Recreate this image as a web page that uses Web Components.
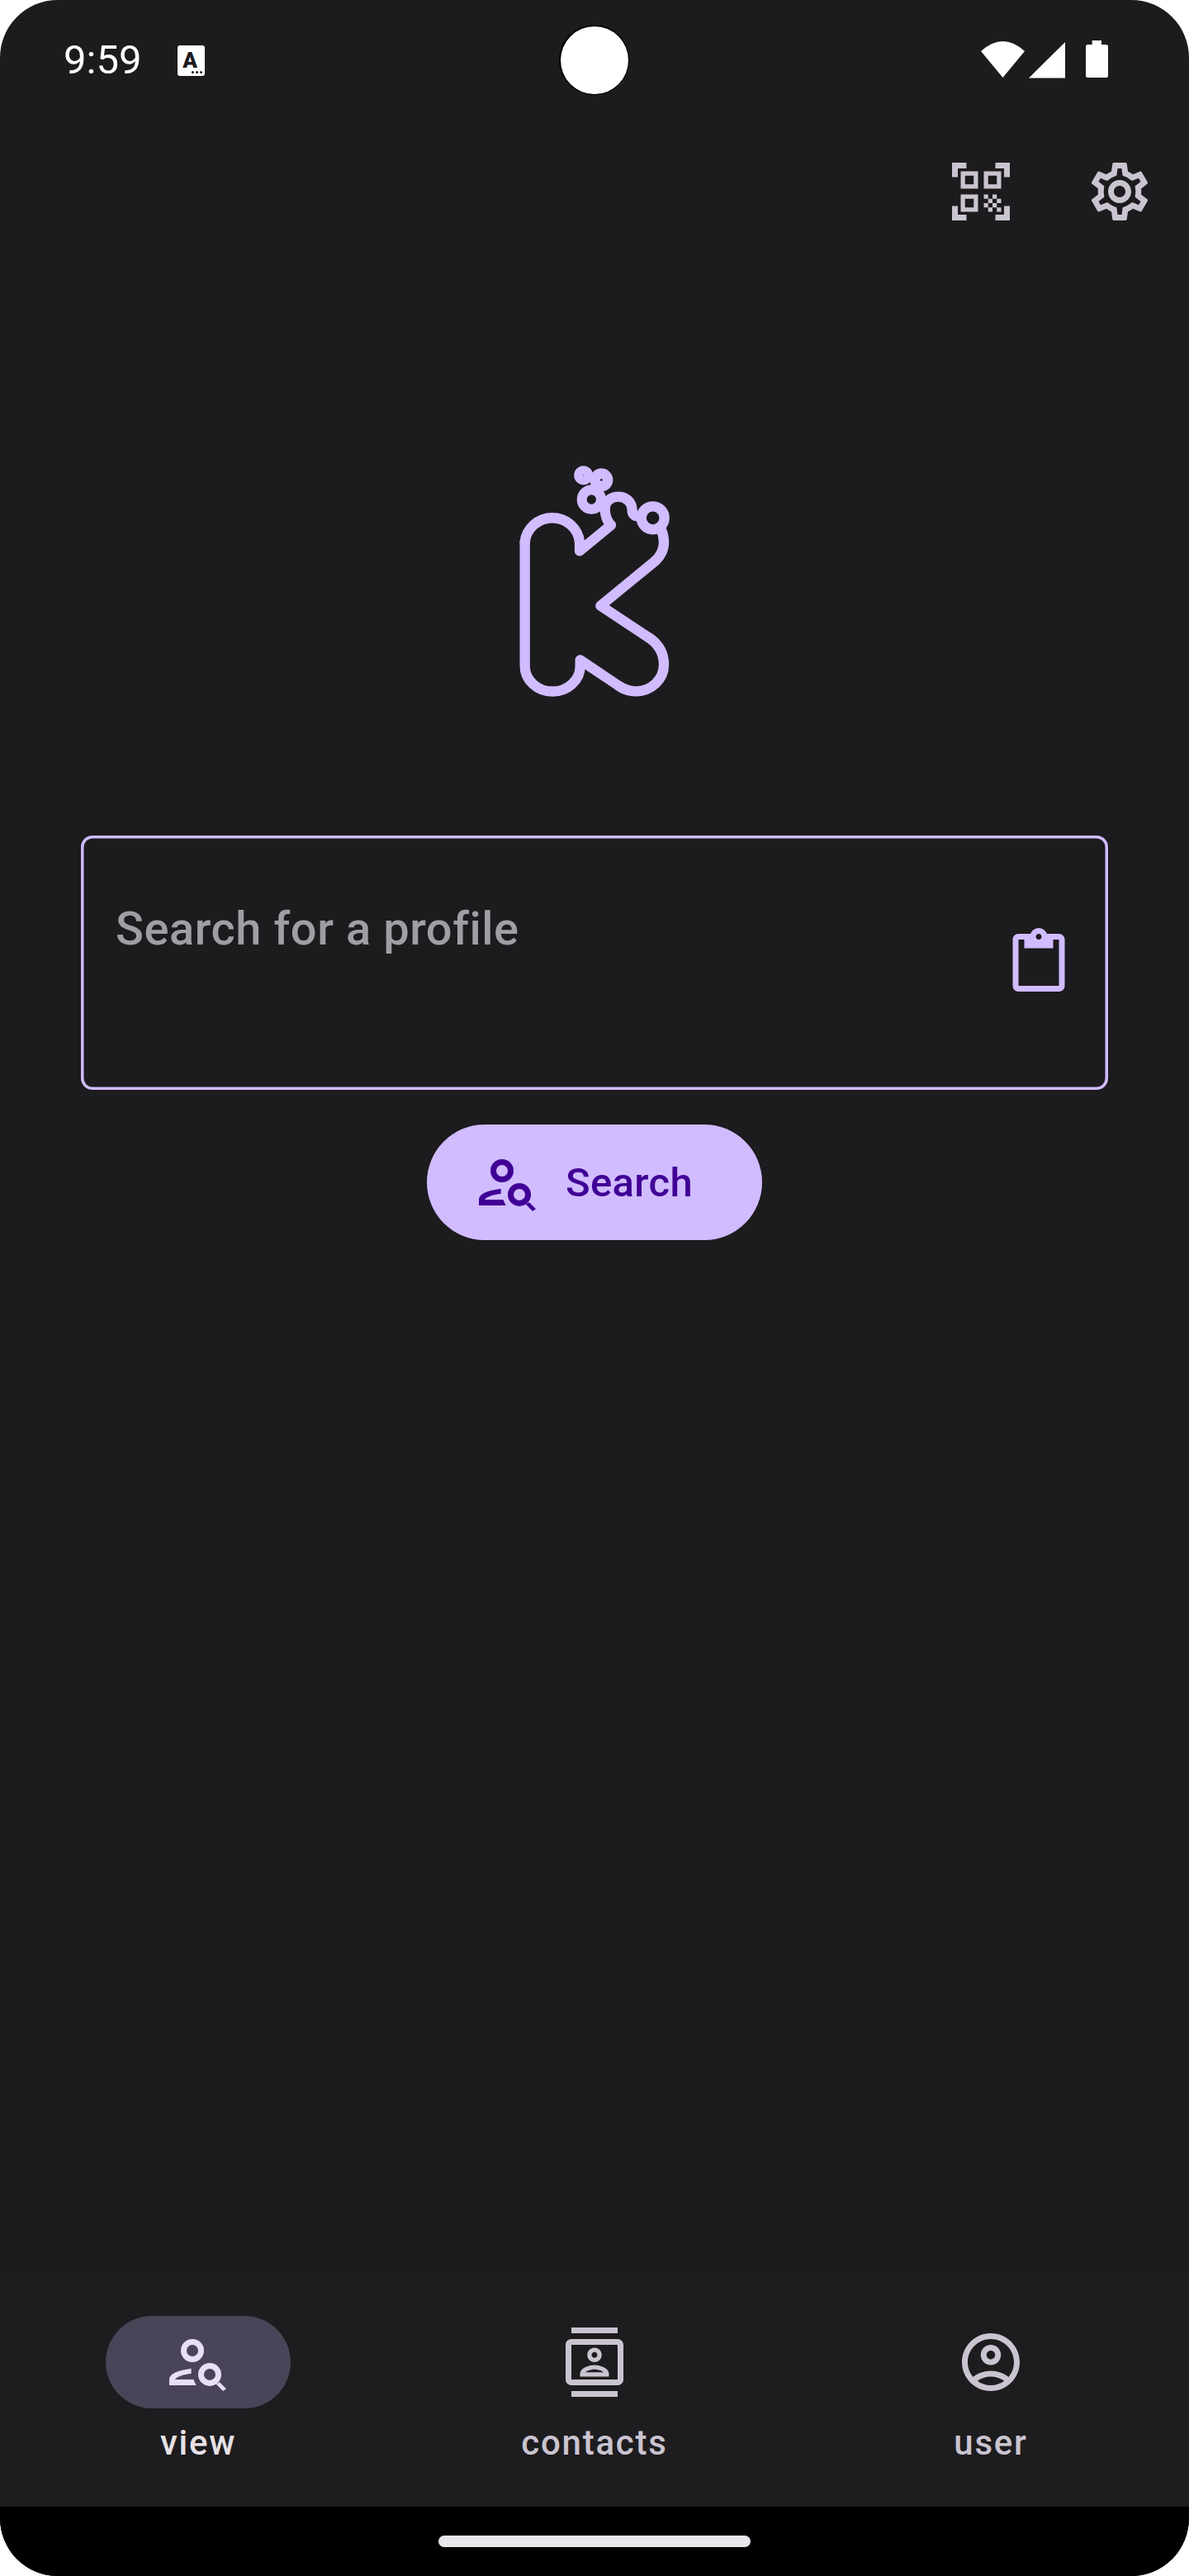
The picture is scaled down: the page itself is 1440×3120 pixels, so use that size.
<!DOCTYPE html>
<html>
<head>
<meta charset="utf-8">
<title>Profile search</title>
<style>
    html, body { margin: 0; padding: 0; background: #fff; }
    body { font-family: Roboto, "Liberation Sans", sans-serif; }
</style>
</head>
<body>

<app-screen>
    <status-bar slot="top"></status-bar>
    <action-bar slot="top">
        <icon-glyph name="qr" style="color:#cac4d0"></icon-glyph>
        <icon-glyph name="settings" style="color:#cac4d0"></icon-glyph>
    </action-bar>

    <search-view></search-view>

    <nav-bar slot="bottom">
        <nav-item icon="personSearch" active>view</nav-item>
        <nav-item icon="contacts">contacts</nav-item>
        <nav-item icon="account">user</nav-item>
    </nav-bar>
    <gesture-bar slot="bottom"></gesture-bar>
</app-screen>

<script>
(function() {
    // material icon paths, 24 unit grid
    const ICONS = {
        qr: 'M9.5 6.5v3h-3v-3h3M11 5H5v6h6V5zm-1.5 9.5v3h-3v-3h3M11 13H5v6h6v-6zm6.5-6.5v3h-3v-3h3M19 5h-6v6h6V5zm-6 8h1.5v1.5H13V13zm1.5 1.5H16V16h-1.5v-1.5zM16 13h1.5v1.5H16V13zm-3 3h1.5v1.5H13V16zm1.5 1.5H16V19h-1.5v-1.5zM16 16h1.5v1.5H16V16zm1.5-1.5H19V16h-1.5v-1.5zm0 3H19V19h-1.5v-1.5zM22 7h-2V4h-3V2h5v5zm0 15v-5h-2v3h-3v2h5zM2 22h5v-2H4v-3H2v5zM2 2v5h2V4h3V2H2z',
        settings: 'M19.43 12.98c.04-.32.07-.64.07-.98 0-.34-.03-.66-.07-.98l2.11-1.65c.19-.15.24-.42.12-.64l-2-3.46c-.09-.16-.26-.25-.44-.25-.06 0-.12.01-.17.03l-2.49 1c-.52-.4-1.08-.73-1.69-.98l-.38-2.65C14.46 2.18 14.25 2 14 2h-4c-.25 0-.46.18-.49.42l-.38 2.65c-.61.25-1.17.59-1.69.98l-2.49-1c-.06-.02-.12-.03-.18-.03-.17 0-.34.09-.43.25l-2 3.46c-.13.22-.07.49.12.64l2.11 1.65c-.04.32-.07.65-.07.98 0 .33.03.66.07.98l-2.11 1.65c-.19.15-.24.42-.12.64l2 3.46c.09.16.26.25.44.25.06 0 .12-.01.17-.03l2.49-1c.52.4 1.08.73 1.69.98l.38 2.65c.03.24.24.42.49.42h4c.25 0 .46-.18.49-.42l.38-2.65c.61-.25 1.17-.59 1.69-.98l2.49 1c.06.02.12.03.18.03.17 0 .34-.09.43-.25l2-3.46c.12-.22.07-.49-.12-.64l-2.11-1.65zm-1.98-1.71c.04.31.05.52.05.73 0 .21-.02.43-.05.73l-.14 1.13.89.7 1.08.84-.7 1.21-1.27-.51-1.04-.42-.9.68c-.43.32-.84.56-1.25.73l-1.06.43-.16 1.13-.2 1.35h-1.4l-.19-1.35-.16-1.13-1.06-.43c-.43-.18-.83-.41-1.23-.71l-.91-.7-1.06.43-1.27.51-.7-1.21 1.08-.84.89-.7-.14-1.13c-.03-.31-.05-.54-.05-.74s.02-.43.05-.73l.14-1.13-.89-.7-1.08-.84.7-1.21 1.27.51 1.04.42.9-.68c.43-.32.84-.56 1.25-.73l1.06-.43.16-1.13.2-1.35h1.39l.19 1.35.16 1.13 1.06.43c.43.18.83.41 1.23.71l.91.7 1.06-.43 1.27-.51.7 1.21-1.07.85-.89.7.14 1.13zM12 8c-2.21 0-4 1.79-4 4s1.79 4 4 4 4-1.79 4-4-1.79-4-4-4zm0 6c-1.1 0-2-.9-2-2s.9-2 2-2 2 .9 2 2-.9 2-2 2z',
        paste: 'M19 2h-4.18C14.4.84 13.3 0 12 0c-1.3 0-2.4.84-2.82 2H5c-1.1 0-2 .9-2 2v16c0 1.1.9 2 2 2h14c1.1 0 2-.9 2-2V4c0-1.1-.9-2-2-2zm-7 0c.55 0 1 .45 1 1s-.45 1-1 1-1-.45-1-1 .45-1 1-1zm7 18H5V4h2v3h10V4h2v16z',
        personSearch: 'M10 4a4 4 0 1 0 0 8 4 4 0 0 0 0-8zm0 2a2 2 0 1 1 0 4 2 2 0 0 1 0-4zM2 20V18C2 16 5 14.800 9.600 14.200V16C7 16.200 4.600 17 4 18H10.400L11.300 20ZM16 12.250a4 4 0 1 0 0 8 4 4 0 0 0 0-8zm0 2a2 2 0 1 1 0 4 2 2 0 0 1 0-4zM19.400 18.900L21.700 21.200L20.600 22L18.200 19.600Z',
        contacts: 'M4 0h16v2H4zm0 22h16v2H4zm8-10c1.38 0 2.5-1.12 2.5-2.5S13.38 7 12 7 9.5 8.12 9.5 9.5 10.62 12 12 12zm0-3.5c.55 0 1 .45 1 1s-.45 1-1 1-1-.45-1-1 .45-1 1-1zm5 7.49C17 13.9 13.69 13 12 13s-5 .9-5 2.99V17h10v-1.01zm-8.19-.49c.61-.52 2.03-1 3.19-1 1.17 0 2.59.48 3.2 1H8.81zM20 4H4c-1.1 0-2 .9-2 2v12c0 1.1.9 2 2 2h16c1.1 0 2-.9 2-2V6c0-1.1-.9-2-2-2zm0 14H4V6h16v12z',
        account: 'M12 2C6.48 2 2 6.48 2 12s4.48 10 10 10 10-4.48 10-10S17.52 2 12 2zM7.35 18.5C8.66 17.56 10.26 17 12 17s3.34.56 4.65 1.5c-1.31.94-2.91 1.5-4.65 1.5s-3.34-.56-4.65-1.5zm10.79-1.38C16.45 15.8 14.32 15 12 15s-4.45.8-6.14 2.12C4.7 15.73 4 13.95 4 12c0-4.42 3.58-8 8-8s8 3.58 8 8c0 1.95-.7 3.73-1.86 5.12zM12 6c-1.93 0-3.5 1.57-3.5 3.5S10.07 13 12 13s3.5-1.57 3.5-3.5S13.93 6 12 6zm0 5c-.83 0-1.5-.67-1.5-1.5S11.17 8 12 8s1.5.67 1.5 1.5S12.83 11 12 11z'
    };

    // small helper, every element below does the same thing in its constructor
    class ShadowElement extends HTMLElement {
        constructor(html) {
            super();
            this.attachShadow({mode: 'open'});
            this.shadowRoot.innerHTML = html;
        }
    }

    class IconGlyph extends ShadowElement {
        constructor() {
            super(`
<style>
    :host { display: block; width: 84px; height: 84px; flex: none; }
    svg { display: block; width: 84px; height: 84px; fill: currentColor; }
</style>
<svg viewBox="0 0 24 24"><path></path></svg>`);
        }

        connectedCallback() {
            this.shadowRoot.querySelector('path').setAttribute('d', ICONS[this.getAttribute('name')]);
        }
    }

    class AppScreen extends ShadowElement {
        constructor() {
            super(`
<style>
    :host {
        display: flex;
        flex-direction: column;
        position: relative;
        width: 1440px;
        height: 3120px;
        background: #1c1b1e;
        border-radius: 70px;
        overflow: hidden;
    }
    .middle { flex: 1; min-height: 0; }
    .camera {
        position: absolute;
        left: 679px;
        top: 32px;
        width: 82px;
        height: 82px;
        background: #fff;
        box-shadow: -.5px -.5px 0 1.5px #000;
        border-radius: 50%;
    }
</style>
<slot name="top"></slot>
<div class="middle"><slot></slot></div>
<slot name="bottom"></slot>
<div class="camera"></div>`);
        }
    }

    class StatusBar extends ShadowElement {
        constructor() {
            super(`
<style>
    :host {
        display: flex;
        align-items: flex-start;
        justify-content: space-between;
        height: 126px;
        box-sizing: border-box;
        padding: 49px 98px 0 77px;
        color: #fff;
    }
    .left { display: flex; align-items: flex-start; }
    .time {
        font: 400 49px/49px Roboto, sans-serif;
        margin-top: -1px;
        width: 138px;
    }
    .note {
        position: relative;
        width: 33px;
        height: 37px;
        margin-top: 6px;
        background: #fff;
        border-radius: 3px;
        color: #1c1b1f;
        font: 900 26px/36px Roboto, sans-serif;
    }
    .note span { display: block; width: 30px; text-align: center; }
    .dots { position: absolute; right: 3px; bottom: 3px; display: flex; gap: 2px; }
    .dots i { width: 3px; height: 3px; background: #1c1b1f; border-radius: 50%; }
    .right { display: flex; align-items: flex-start; }
    svg { display: block; fill: #fff; }
</style>
<div class="left">
    <div class="time">9:59</div>
    <div class="note"><span>A</span><div class="dots"><i></i><i></i><i></i></div></div>
</div>
<div class="right">
    <svg width="154" height="46" viewBox="1188 49 154 46">
        <path d="M1188 62Q1214.5 38 1241 62L1214.5 94Z"/>
        <path d="M1246 94.500L1290 51V94.500Z"/>
        <path d="M1322.700 49H1334V54H1339.500Q1342 54 1342 56.500V91.500Q1342 94 1339.500 94H1317.500Q1315 94 1315 91.500V56.500Q1315 54 1317.500 54H1322.700Z"/>
    </svg>
</div>`);
        }
    }

    class ActionBar extends ShadowElement {
        constructor() {
            super(`
<style>
    :host {
        display: flex;
        align-items: center;
        justify-content: flex-end;
        gap: 84px;
        height: 212px;
        padding-right: 42px;
    }
</style>
<slot></slot>`);
        }
    }

    class AppLogo extends ShadowElement {
        constructor() {
            super(`
<style>
    :host { display: block; width: 240px; height: 300px; }
    svg { display: block; }
    path, circle { fill: none; stroke: #d0bcff; stroke-linejoin: round; stroke-linecap: round; }
</style>
<svg width="240" height="300" viewBox="0 0 720 900">
    <path stroke-width="37" d="M107 320A100 98 0 0 1 306 320V352L420 258C402 240 398 215 398 198C398 172 420 155 447 155C475 155 497 175 497 205C497 218 505 226 520 226"/>
    <path stroke-width="37" d="M600 268C608 285 612 303 612 320C612 350 600 372 575 393L382 551L565 672C595 695 612 725 612 765A102 97 0 0 1 510 862C485 862 465 855 445 840L308 748V770A100 92 0 0 1 107 770V320"/>
    <circle cx="572" cy="232" r="42" stroke-width="37"/>
    <circle cx="349" cy="165" r="35" stroke-width="36"/>
    <circle cx="320" cy="77" r="18" stroke-width="33"/>
    <circle cx="385" cy="94" r="23" stroke-width="38"/>
</svg>`);
        }
    }

    class SearchField extends ShadowElement {
        constructor() {
            super(`
<style>
    :host {
        display: flex;
        justify-content: space-between;
        width: 1244px;
        height: 308px;
        box-sizing: border-box;
        padding: 85px 42px 0 42px;
        border-radius: 14px;
        box-shadow: inset 0 0 0 3.5px #d0bcff;
    }
    .hint {
        font: 500 56px/56px Roboto, sans-serif;
        letter-spacing: .55px;
        color: #a09ea3;
    }
    icon-glyph { margin-top: 27px; color: #d0bcff; }
</style>
<div class="hint"><slot></slot></div>
<icon-glyph name="paste"></icon-glyph>`);
        }
    }

    class SearchButton extends ShadowElement {
        constructor() {
            super(`
<style>
    :host {
        display: flex;
        align-items: center;
        gap: 28px;
        height: 140px;
        box-sizing: border-box;
        padding: 0 84px 0 56px;
        border-radius: 70px;
        background: #d0bcff;
        color: #400095;
        font: 500 49px/1 Roboto, sans-serif;
        letter-spacing: .35px;
    }
</style>
<icon-glyph name="personSearch"></icon-glyph>
<slot></slot>`);
        }
    }

    class SearchView extends ShadowElement {
        constructor() {
            super(`
<style>
    :host {
        display: flex;
        flex-direction: column;
        align-items: center;
        padding-top: 212px;
    }
    search-field { margin-top: 162px; }
    search-button { margin-top: 42px; }
</style>
<app-logo></app-logo>
<search-field>Search for a profile</search-field>
<search-button>Search</search-button>`);
        }
    }

    class NavBar extends ShadowElement {
        constructor() {
            super(`
<style>
    :host {
        display: grid;
        grid-template-columns: repeat(3, 1fr);
        height: 280px;
        background: #1d1c1f;
    }
</style>
<slot></slot>`);
        }
    }

    class NavItem extends ShadowElement {
        constructor() {
            super(`
<style>
    :host {
        display: flex;
        flex-direction: column;
        align-items: center;
        padding-top: 49px;
        color: #cac4d0;
    }
    :host([active]) { color: #e6e1e5; }
    .pill {
        display: flex;
        align-items: center;
        justify-content: center;
        width: 224px;
        height: 112px;
        border-radius: 56px;
    }
    :host([active]) .pill { background: #4a4458; }
    :host([active]) icon-glyph { color: #e8def8; }
    .label {
        margin-top: 14px;
        font: 500 42px/56px Roboto, sans-serif;
        letter-spacing: 1.75px;
    }
</style>
<div class="pill"><icon-glyph></icon-glyph></div>
<div class="label"><slot></slot></div>`);
        }

        connectedCallback() {
            const glyph = this.shadowRoot.querySelector('icon-glyph');
            glyph.setAttribute('name', this.getAttribute('icon'));
            glyph.connectedCallback();
        }
    }

    class GestureBar extends ShadowElement {
        constructor() {
            super(`
<style>
    :host {
        display: flex;
        justify-content: center;
        height: 84px;
        box-sizing: border-box;
        padding-top: 35px;
        background: #000;
    }
    .handle { width: 378px; height: 14px; border-radius: 7px; background: #e8e6eb; }
</style>
<div class="handle"></div>`);
        }
    }

    customElements.define('icon-glyph', IconGlyph);
    customElements.define('status-bar', StatusBar);
    customElements.define('action-bar', ActionBar);
    customElements.define('app-logo', AppLogo);
    customElements.define('search-field', SearchField);
    customElements.define('search-button', SearchButton);
    customElements.define('search-view', SearchView);
    customElements.define('nav-item', NavItem);
    customElements.define('nav-bar', NavBar);
    customElements.define('gesture-bar', GestureBar);
    customElements.define('app-screen', AppScreen);
})();
</script>
</body>
</html>
